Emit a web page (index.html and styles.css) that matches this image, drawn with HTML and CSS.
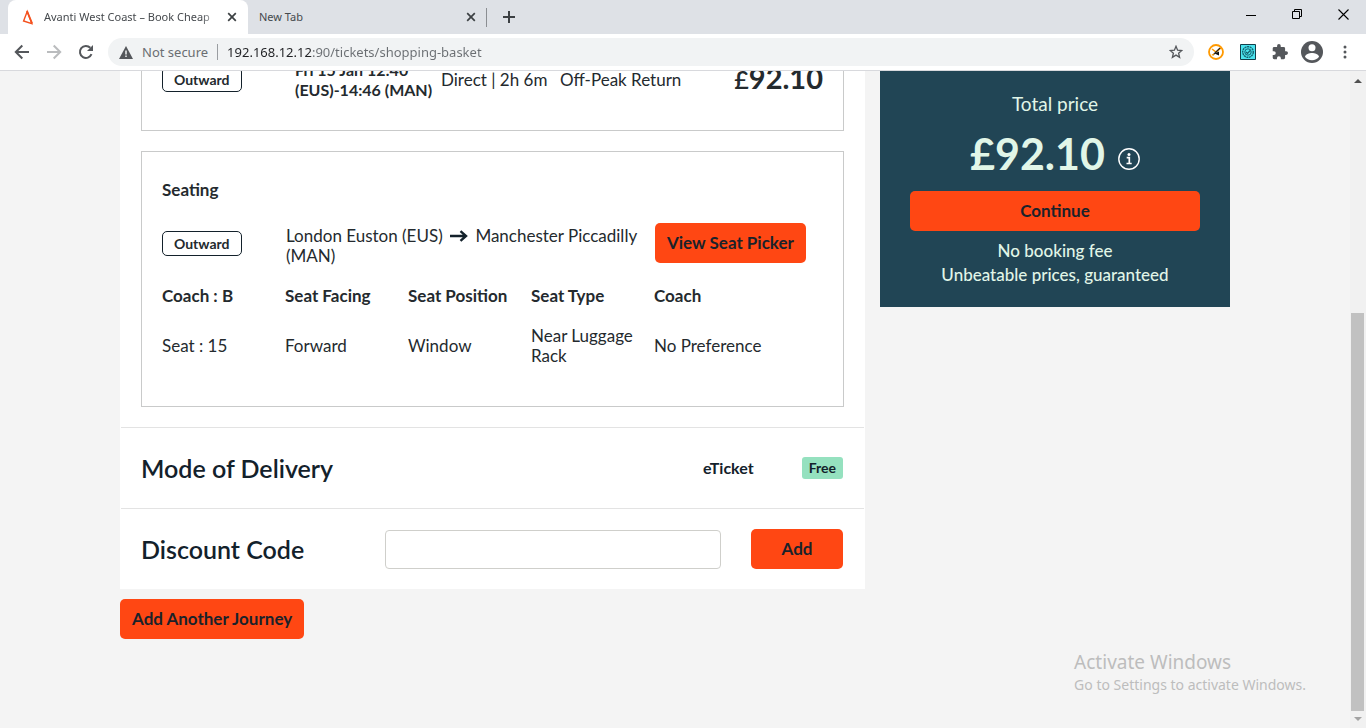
FILE: index.html
```html
<!DOCTYPE html>
<html lang="en">
<head>
<meta charset="utf-8">
<title>Avanti West Coast – Book Cheap</title>
<link rel="stylesheet" href="styles.css">
</head>
<body>
<header class="browser">
  <div class="tabstrip">
    <div class="tab tab-active">
      <svg class="favicon" width="16" height="16" viewBox="0 0 16 16"><path d="M7.200 2.500 3.600 12l8.200 2.600z" fill="none" stroke="#f4511e" stroke-width="1.400"/><path d="M7 2l5.200 12.500" stroke="#f4511e" stroke-width="1.800"/></svg>
      <span class="tab-title">Avanti West Coast – Book Cheap</span>
      <button class="icon-btn" aria-label="Close tab"><svg width="10" height="10" viewBox="0 0 10 10"><path d="M1.2 1.2 8.8 8.8M8.8 1.2 1.2 8.8" stroke="#3c4043" stroke-width="1.7"/></svg></button>
    </div>
    <div class="tab tab-idle">
      <span class="tab-title">New Tab</span>
      <button class="icon-btn" aria-label="Close tab"><svg width="10" height="10" viewBox="0 0 10 10"><path d="M1.2 1.2 8.8 8.8M8.8 1.2 1.2 8.8" stroke="#3c4043" stroke-width="1.7"/></svg></button>
    </div>
    <button class="icon-btn new-tab" aria-label="New tab"><svg width="12" height="12" viewBox="0 0 12 12"><path d="M6 0v12M0 6h12" stroke="#3c4043" stroke-width="2"/></svg></button>
    <div class="window-controls">
      <button class="icon-btn" aria-label="Minimise"><svg width="11" height="11" viewBox="0 0 11 11"><path d="M0 6.5h10" stroke="#000"/></svg></button>
      <button class="icon-btn" aria-label="Restore"><svg width="11" height="11" viewBox="0 0 11 11" fill="none" stroke="#000"><path d="M.5 2.5h7v7h-7zM2.500 2.500v-2h7v7h-2"/></svg></button>
      <button class="icon-btn" aria-label="Close window"><svg width="11" height="11" viewBox="0 0 11 11"><path d="M.5.5l10 10M10.500.5l-10 10" stroke="#000" stroke-width="1.1"/></svg></button>
    </div>
  </div>
  <div class="toolbar">
    <div class="nav">
      <button class="icon-btn" aria-label="Back"><svg width="16" height="16" viewBox="0 0 16 16" fill="none" stroke="#54575b" stroke-width="2"><path d="M15 8H2M8.300 1.500 1.800 8l6.500 6.500"/></svg></button>
      <button class="icon-btn" aria-label="Forward"><svg width="16" height="16" viewBox="0 0 16 16" fill="none" stroke="#babcbe" stroke-width="2"><path d="M1 8h13M7.700 1.500 14.200 8l-6.500 6.500"/></svg></button>
      <button class="icon-btn" aria-label="Reload"><svg width="16" height="16" viewBox="0 0 16 16"><path d="M13.500 10.200A6 6 0 1 1 12.300 3.800" fill="none" stroke="#54575b" stroke-width="2"/><path d="M15 1v6H9z" fill="#54575b"/></svg></button>
    </div>
    <div class="omnibox">
      <svg width="14" height="13" viewBox="0 0 14 13"><path d="M7 0l7 13H0z" fill="#54575b"/><path d="M7 4.500v4M7 9.500v1.600" stroke="#f1f3f4" stroke-width="1.5"/></svg>
      <label class="security" for="url">Not secure</label>
      <input class="url" id="url" type="text" value="192.168.12.12:90/tickets/shopping-basket">
      <button class="icon-btn" aria-label="Bookmark this page"><svg width="14" height="14" viewBox="0 0 14 14"><path d="M7 1.300 8.600 5.200l4.200.3-3.200 2.700 1 4.100L7 10.100l-3.600 2.200 1-4.100L1.200 5.500l4.200-.3z" fill="none" stroke="#54575b" stroke-width="1.300"/></svg></button>
    </div>
    <div class="extensions">
      <button class="icon-btn" aria-label="Page speed"><svg width="16" height="16" viewBox="0 0 16 16"><circle cx="8" cy="8" r="7" fill="#fff" stroke="#f90" stroke-width="1.800"/><path d="M4 5l4 3 5-4" fill="none" stroke="#f90" stroke-width="1.500"/><path d="M12 4 5 11" stroke="#222" stroke-width="1.100"/><path d="M6.500 9.500 11 7.500v4z" fill="#111"/><path d="M3.500 10.500l3-1-1.500 2.500z" fill="#f90"/></svg></button>
      <button class="icon-btn" aria-label="Inspector"><svg width="16" height="16" viewBox="0 0 16 16"><path d="M.5.5h15v15H.5z" fill="#4be3ee" stroke="#123f4b"/><circle cx="8" cy="8" r="5.300" fill="none" stroke="#14616e" stroke-width="1.400" stroke-dasharray="2 .6"/><circle cx="8" cy="8" r="3.200" fill="none" stroke="#14616e"/><path d="M6 8l1.500 1.500L10.200 6.500" fill="none" stroke="#14616e" stroke-width="1.200"/></svg></button>
      <button class="icon-btn" aria-label="Extensions"><svg width="16" height="16" viewBox="1 1 22 22"><path fill="#54575b" d="M20.500 11H19V7a2 2 0 0 0-2-2h-4V3.500a2.500 2.500 0 0 0-5 0V5H4a2 2 0 0 0-2 2v3.800h1.500a2.700 2.700 0 0 1 0 5.400H2V20a2 2 0 0 0 2 2h3.800v-1.500a2.700 2.700 0 0 1 5.400 0V22H17a2 2 0 0 0 2-2v-4h1.500a2.500 2.500 0 0 0 0-5z"/></svg></button>
      <button class="icon-btn" aria-label="Profile"><svg width="22" height="22" viewBox="0 0 22 22"><circle cx="11" cy="11" r="11" fill="#54575b"/><circle cx="11" cy="6.800" r="3.500" fill="#fff"/><path d="M4 15.800c0-2.500 4.500-3.800 7-3.800s7 1.300 7 3.800c-1.500 2.100-4 3.400-7 3.400s-5.500-1.300-7-3.400z" fill="#fff"/></svg></button>
      <button class="icon-btn" aria-label="Menu"><svg width="4" height="14" viewBox="0 0 4 14" fill="#54575b"><circle cx="2" cy="2" r="1.500"/><circle cx="2" cy="7" r="1.500"/><circle cx="2" cy="12" r="1.500"/></svg></button>
    </div>
  </div>
</header>

<div class="viewport">
  <main class="page">
    <div class="container">
      <div class="basket">
        <div class="panel">
          <section class="card ticket">
            <span class="pill">Outward</span>
            <strong class="ticket-time">Fri 15 Jan 12:40 (EUS)-14:46 (MAN)</strong>
            <span>Direct | 2h 6m</span>
            <span class="ticket-type">Off-Peak Return</span>
            <strong class="ticket-price"><small>£</small>92.10</strong>
          </section>
          <section class="card seating">
            <h3 class="card-title">Seating</h3>
            <div class="leg">
              <div class="leg-direction"><span class="pill">Outward</span></div>
              <p class="leg-route">London Euston (EUS) <svg class="arrow" width="18" height="12" viewBox="0 0 18 12" role="img" aria-label="to"><path d="M0 6h15M10.500 1.200 16 6l-5.500 4.800" fill="none" stroke="#13212b" stroke-width="2.400"/></svg> Manchester Piccadilly (MAN)</p>
              <div><button class="btn">View Seat Picker</button></div>
            </div>
            <table class="seats">
              <thead><tr><th>Coach : B</th><th>Seat Facing</th><th>Seat Position</th><th>Seat Type</th><th class="last">Coach</th></tr></thead>
              <tbody><tr><td>Seat : 15</td><td>Forward</td><td>Window</td><td>Near Luggage Rack</td><td>No Preference</td></tr></tbody>
            </table>
          </section>
          <section class="row">
            <h2 class="heading">Mode of Delivery</h2>
            <div class="delivery"><strong>eTicket</strong><span class="badge">Free</span></div>
          </section>
          <form class="row discount">
            <label class="heading" for="code">Discount Code</label>
            <input class="code" id="code" type="text">
            <button class="btn btn-add" type="button">Add</button>
          </form>
        </div>
        <button class="btn">Add Another Journey</button>
      </div>
      <aside class="summary">
        <p class="summary-label">Total price</p>
        <div class="total"><span class="total-price">£92.10</span><button class="icon-btn" aria-label="Price information"><svg width="22" height="22" viewBox="0 0 22 22"><circle cx="11" cy="11" r="10.200" fill="none" stroke="#fff" stroke-width="1.400"/><circle cx="11" cy="6.500" r="1.500" fill="#fff"/><path d="M8.700 9.700h2.600v5.600M8.500 15.500h5.200" fill="none" stroke="#fff" stroke-width="1.700"/></svg></button></div>
        <button class="btn btn-wide">Continue</button>
        <p class="summary-note">No booking fee<br>Unbeatable prices, guaranteed</p>
      </aside>
    </div>
  </main>
  <div class="scrollbar">
    <svg width="8" height="4" viewBox="0 0 8 4"><path d="M0 4l4-4 4 4z" fill="#505050"/></svg>
    <div class="thumb"></div>
    <svg width="8" height="4" viewBox="0 0 8 4"><path d="M0 0l4 4 4-4z" fill="#a3a3a3"/></svg>
  </div>
  <div class="watermark"><p class="watermark-title">Activate Windows</p><p>Go to Settings to activate Windows.</p></div>
</div>
</body>
</html>
```
FILE: styles.css
```css
* { box-sizing: border-box; }

body {
  margin: 0;
  height: 100vh;
  display: flex;
  flex-direction: column;
  overflow: hidden;
  background: #f4f4f4;
  color: #242a2e;
  font: 17px/20px Lato, "Liberation Sans", sans-serif;
}

p, h2, h3 { margin: 0; }
button, input { font: inherit; color: inherit; }

.icon-btn {
  display: flex;
  padding: 0;
  border: 0;
  background: none;
}

/* Browser window */
.browser {
  position: relative;
  z-index: 1;
  flex: none;
  background: #fff;
  border-bottom: 1px solid #d8d9dd;
  font-family: "Noto Sans", "Open Sans", sans-serif;
}

.tabstrip {
  display: flex;
  height: 34px;
  padding-left: 8px;
  background: #dee1e6;
}

.tab {
  display: flex;
  align-items: center;
  width: 240px;
  font-size: 11px;
  line-height: 16px;
  color: #45494d;
}

.tab-active {
  padding: 0 11px 0 12px;
  background: #fff;
  border-radius: 8px 8px 0 0;
}

.tab-active .tab-title {
  margin: 0 8px;
  mask-image: linear-gradient(90deg, #000 90%, transparent);
}

.tab-idle {
  padding: 0 12px 0 11px;
  position: relative;
}

.tab-idle::after {
  content: "";
  position: absolute;
  right: 1px;
  top: 8px;
  height: 19px;
  border-right: 1px solid #8b8e92;
}

.tab-title {
  flex: 1;
  overflow: hidden;
  white-space: nowrap;
}

.new-tab { align-items: center; margin-left: 15px; }

.window-controls {
  display: flex;
  align-items: center;
  gap: 35px;
  margin-left: auto;
  padding: 0 17px 6px 0;
}

.toolbar {
  display: flex;
  align-items: center;
  height: 36px;
}

.nav {
  display: flex;
  gap: 16px;
  padding: 0 14px;
}

.omnibox {
  display: flex;
  flex: 1;
  align-items: center;
  height: 28px;
  padding: 0 11px;
  border-radius: 14px;
  background: #f1f3f4;
  font-size: 13px;
}

.security {
  margin: 0 9px;
  padding-right: 9px;
  border-right: 1px solid #9a9da1;
  color: #6a6e72;
  line-height: 16px;
}

.url {
  flex: 1;
  min-width: 0;
  padding: 0;
  border: 0;
  outline: 0;
  color: transparent;
  background: linear-gradient(90deg, #202124 86px, #6a6e72 86px);
  background-clip: text;
  -webkit-background-clip: text;
}

.extensions {
  display: flex;
  align-items: center;
  gap: 16px;
  padding: 0 19px 0 14px;
}

.extensions .icon-btn:nth-child(n+4) { margin-left: -3px; }
.extensions .icon-btn:last-child { margin-left: 4px; }

/* Scrolled page */
.viewport {
  position: relative;
  display: flex;
  flex: 1;
  min-height: 0;
}

.page { flex: 1; min-width: 0; }

.container {
  display: grid;
  grid-template-columns: minmax(0, 745px) minmax(0, 350px);
  gap: 15px;
  align-items: start;
  justify-content: center;
  margin-top: -41px;
}

.panel {
  margin-bottom: 10px;
  padding: 0 1px;
  background: #fff;
}

.card {
  margin: 0 20px 20px;
  padding: 0 20px;
  border: 1px solid #c9caca;
}

.ticket {
  display: grid;
  grid-template-columns: 133px 146px 119px 1fr auto;
  align-items: center;
  height: 101px;
  padding-bottom: 2px;
}

.pill {
  justify-self: start;
  display: inline-block;
  padding: 0 11px;
  border: 1px solid #13212b;
  border-radius: 5px;
  font-size: 14px;
  font-weight: 700;
  line-height: 23px;
}

.ticket-time { padding-right: 8px; font-size: 16px; }
.ticket-price { padding-bottom: 3px; font-size: 29px; line-height: 32px; }
.ticket-price small { font-size: 25px; font-weight: 600; }

.seating { padding-top: 28px; padding-bottom: 20px; }
.card-title { font-size: 17px; line-height: 20px; }

.leg {
  display: grid;
  grid-template-columns: 124px 369px 1fr;
  align-items: start;
  margin: 23px 0 20px;
}

.leg-direction { display: flex; align-items: center; height: 40px; }
.leg-route { padding: 3px 4px 0 0; }
.arrow { margin: 0 3px; }

.btn {
  height: 40px;
  padding: 0 12px;
  border: 0;
  border-radius: 5px;
  background: #ff4713;
  color: #1a222a;
  font-size: 17px;
  font-weight: 700;
  white-space: nowrap;
}

.seats {
  width: 100%;
  table-layout: fixed;
  border-collapse: collapse;
  text-align: left;
}

.seats th { width: 123px; padding: 0 0 10px; }
.seats .last { width: auto; }
.seats td { padding: 10px 8px 20px 0; }

.row {
  display: flex;
  align-items: center;
  justify-content: space-between;
  padding: 20px 21px 20px 20px;
  min-height: 81px;
  border-top: 1px solid #e3e3e3;
  color: #13212b;
}

.heading { font-size: 25px; line-height: 32px; font-weight: 600; }

.delivery {
  display: flex;
  align-items: center;
  gap: 48px;
  font-size: 16px;
}

.badge {
  padding: 0 7px;
  border-radius: 3px;
  background: #95e1bf;
  font-size: 14px;
  line-height: 22px;
  font-weight: 700;
}

.discount .heading { width: 244px; }

.code {
  flex: 1;
  min-width: 0;
  height: 39px;
  margin-right: 30px;
  padding: 0 12px;
  border: 1px solid #cfcfcb;
  border-radius: 4px;
  background: #fff;
}

.btn-add { width: 92px; }

.summary {
  padding: 62px 30px 20px;
  background: #214555;
  color: #e1f6e8;
  text-align: center;
}

.summary-label { font-size: 19px; line-height: 24px; }

.total {
  display: flex;
  align-items: center;
  justify-content: center;
  gap: 13px;
  height: 75px;
}

.total-price { font-size: 43px; line-height: 56px; font-weight: 700; }
.total .icon-btn { margin-top: 10px; }
.btn-wide { width: 100%; }
.summary-note { padding-top: 8px; line-height: 24px; font-weight: 500; }

.scrollbar {
  display: flex;
  flex-direction: column;
  align-items: center;
  justify-content: space-between;
  width: 16px;
  padding: 8px 1px 7px 0;
  background: #f1f1f1;
}

.thumb {
  width: 13px;
  height: 62%;
  margin: auto 0 6px;
  background: #c1c1c1;
}

.watermark {
  position: absolute;
  right: 60px;
  bottom: 33px;
  color: #bdbdbd;
  font: 14px/20px "Noto Sans", "Open Sans", sans-serif;
}

.watermark-title { font-size: 19px; line-height: 26px; }
```
